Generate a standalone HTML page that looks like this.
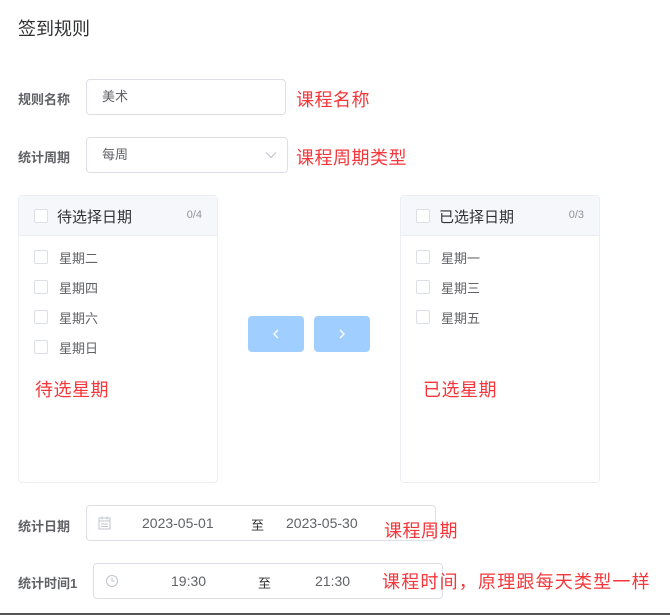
<!DOCTYPE html>
<html><head><meta charset="utf-8"><style>
*{box-sizing:border-box;margin:0;padding:0}
body{width:670px;height:615px;background:#fff;position:relative;overflow:hidden;font-family:"Liberation Sans","Noto Sans CJK SC",sans-serif;color:#606266}
.a{position:absolute}
.lbl{font-size:13px;font-weight:bold;color:#606266}
.inp{border:1px solid #dcdfe6;border-radius:4px;background:#fff;font-size:13px}
.panel{border:1px solid #ebeef5;border-radius:4px;background:#fff}
.hd{height:40px;background:#f5f7fa;border-bottom:1px solid #ebeef5;position:relative}
.cb{position:absolute;width:14px;height:14px;border:1px solid #dcdfe6;border-radius:2px;background:#fff}
.it{position:absolute;font-size:13px;color:#606266}
.red{color:#f5363b;font-size:18px;letter-spacing:0.5px}
.btn{position:absolute;background:#a0cfff;border-radius:4px}
.btn svg{position:absolute;left:24px;top:13px}
</style></head><body>
<div class="a" style="left:18px;top:15px;font-size:18px;color:#303133">签到规则</div>

<div class="a lbl" style="left:18px;top:89px">规则名称</div>
<div class="a inp" style="left:86px;top:79px;width:200px;height:36px;padding:0 15px;line-height:34px">美术</div>
<div class="a red" style="left:296px;top:86px">课程名称</div>

<div class="a lbl" style="left:18px;top:147px">统计周期</div>
<div class="a inp" style="left:86px;top:137px;width:202px;height:36px;padding:0 15px;line-height:34px">每周
<svg style="position:absolute;right:10px;top:13px" width="12" height="8" viewBox="0 0 12 8"><path d="M1 1.5 6 6.5 11 1.5" fill="none" stroke="#c0c4cc" stroke-width="1.2"/></svg></div>
<div class="a red" style="left:296px;top:144px">课程周期类型</div>

<div class="a panel" style="left:18px;top:195px;width:200px;height:288px">
 <div class="hd"><div class="cb" style="left:15px;top:13px"></div><div class="it" style="left:38px;top:10px;font-size:15px;color:#303133">待选择日期</div><div class="it" style="right:15px;top:13px;font-size:11px;color:#909399">0/4</div></div>
 <div class="cb" style="left:15px;top:54px"></div><div class="it" style="left:40px;top:52px">星期二</div>
 <div class="cb" style="left:15px;top:84px"></div><div class="it" style="left:40px;top:82px">星期四</div>
 <div class="cb" style="left:15px;top:114px"></div><div class="it" style="left:40px;top:112px">星期六</div>
 <div class="cb" style="left:15px;top:144px"></div><div class="it" style="left:40px;top:142px">星期日</div>
 <div class="it red" style="left:16px;top:180px">待选星期</div>
</div>
<div class="a panel" style="left:400px;top:195px;width:200px;height:288px">
 <div class="hd"><div class="cb" style="left:15px;top:13px"></div><div class="it" style="left:38px;top:10px;font-size:15px;color:#303133">已选择日期</div><div class="it" style="right:15px;top:13px;font-size:11px;color:#909399">0/3</div></div>
 <div class="cb" style="left:15px;top:54px"></div><div class="it" style="left:40px;top:52px">星期一</div>
 <div class="cb" style="left:15px;top:84px"></div><div class="it" style="left:40px;top:82px">星期三</div>
 <div class="cb" style="left:15px;top:114px"></div><div class="it" style="left:40px;top:112px">星期五</div>
 <div class="it red" style="left:22px;top:180px">已选星期</div>
</div>
<div class="btn" style="left:248px;top:316px;width:56px;height:36px"><svg width="8" height="10" viewBox="0 0 8 10"><path d="M6 1 2 5 6 9" fill="none" stroke="#fff" stroke-width="1.3"/></svg></div>
<div class="btn" style="left:314px;top:316px;width:56px;height:36px"><svg width="8" height="10" viewBox="0 0 8 10"><path d="M2 1 6 5 2 9" fill="none" stroke="#fff" stroke-width="1.3"/></svg></div>

<div class="a lbl" style="left:18px;top:516px">统计日期</div>
<div class="a inp" style="left:86px;top:505px;width:350px;height:36px;color:#606266">
 <svg style="position:absolute;left:11px;top:10px" width="13" height="14" viewBox="0 0 13 14"><rect x="1" y="2" width="11" height="11" fill="none" stroke="#c0c4cc"/><path d="M1 5h11M3 8h7M3 10.5h7M4 0.5v3M9 0.5v3" stroke="#c0c4cc"/></svg>
 <span style="position:absolute;left:55px;top:9px;font-size:14px">2023-05-01</span>
 <span style="position:absolute;left:164px;top:9px;font-size:13px;color:#303133">至</span>
 <span style="position:absolute;left:199px;top:9px;font-size:14px">2023-05-30</span>
</div>
<div class="a red" style="left:384px;top:517px">课程周期</div>

<div class="a lbl" style="left:18px;top:573px">统计时间1</div>
<div class="a inp" style="left:93px;top:563px;width:350px;height:36px">
 <svg style="position:absolute;left:11px;top:10px" width="14" height="14" viewBox="0 0 14 14"><circle cx="7" cy="7" r="5.5" fill="none" stroke="#c0c4cc"/><path d="M7 3.5V7h2.5" fill="none" stroke="#c0c4cc"/></svg>
 <span style="position:absolute;left:77px;top:9px;font-size:14px">19:30</span>
 <span style="position:absolute;left:164px;top:9px;font-size:13px;color:#303133">至</span>
 <span style="position:absolute;left:221px;top:9px;font-size:14px">21:30</span>
</div>
<div class="a red" style="left:382px;top:568px;letter-spacing:1.2px">课程时间，原理跟每天类型一样</div>
<div class="a" style="left:0;top:613px;width:670px;height:2px;background:#555"></div>
</body></html>
